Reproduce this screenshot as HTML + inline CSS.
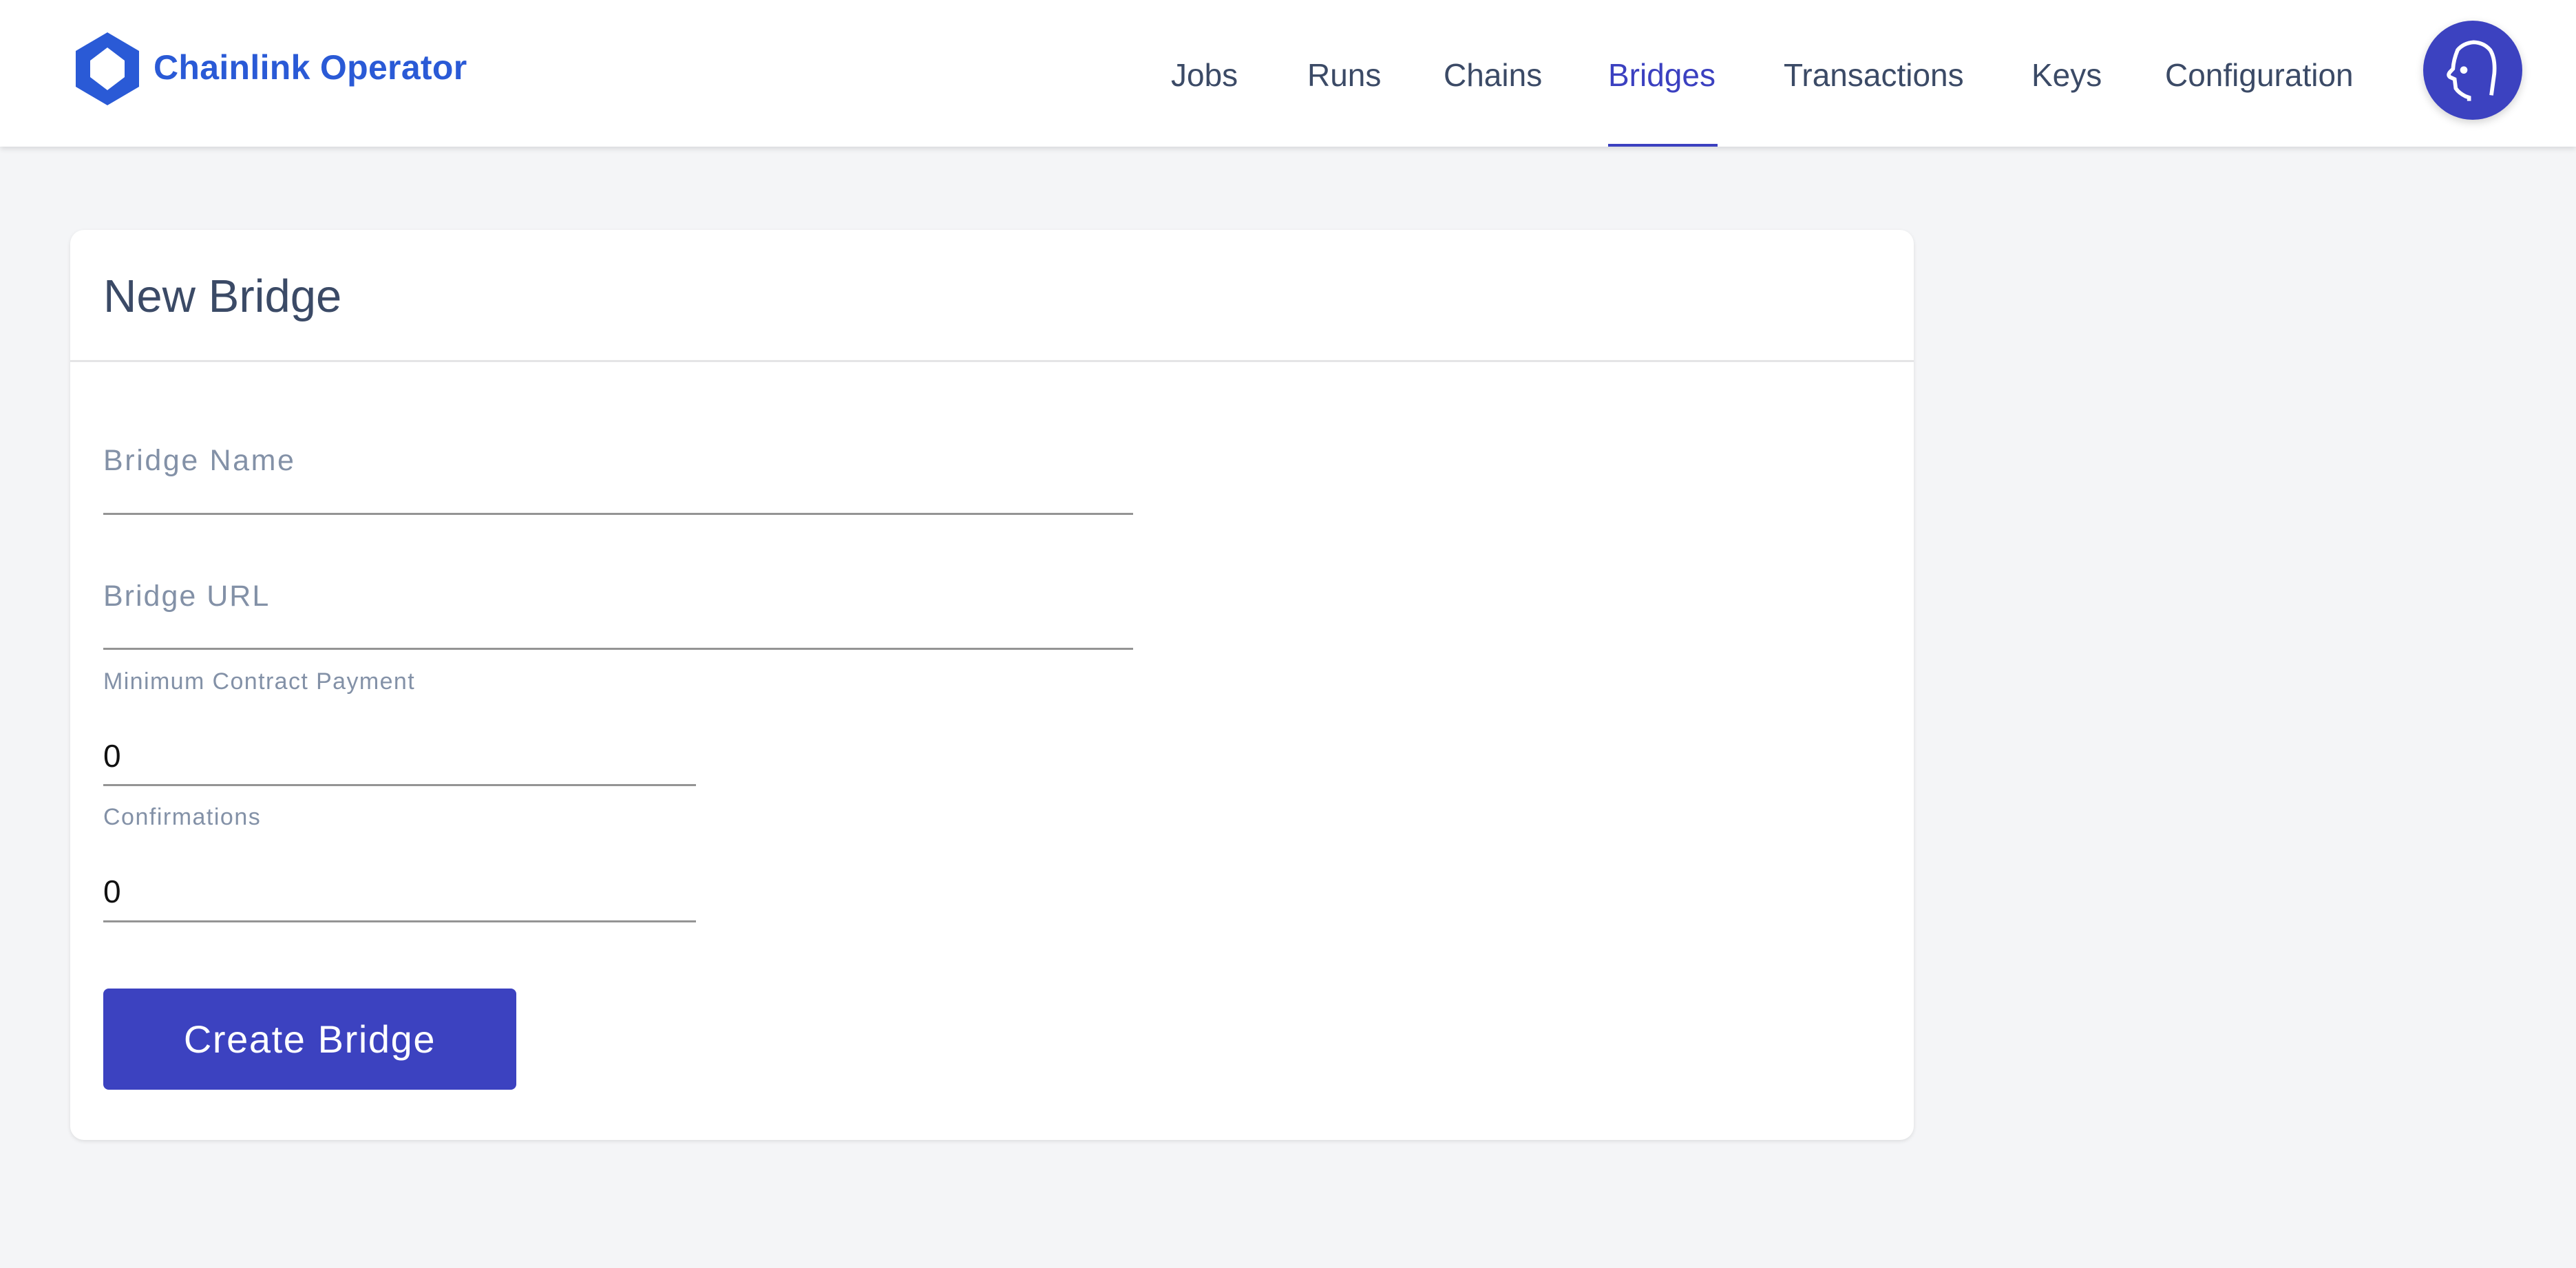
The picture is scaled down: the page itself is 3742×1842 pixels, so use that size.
<!DOCTYPE html>
<html><head><meta charset="utf-8"><style>
*{margin:0;padding:0;box-sizing:border-box}
body{width:3742px;height:1842px;background:#f4f5f7;font-family:"Liberation Sans",sans-serif;position:relative;overflow:hidden}
.hdr{position:absolute;left:0;top:0;width:3742px;height:213px;background:#fff;box-shadow:0 3px 8px rgba(0,0,0,.12)}
.abs{position:absolute;white-space:nowrap;line-height:1}
.nav{font-size:46px;color:#3b4a66;top:86px}
.card{position:absolute;left:102px;top:334px;width:2678px;height:1322px;background:#fff;border-radius:20px;box-shadow:0 2px 6px rgba(0,0,0,.1)}
.lbl{color:#8391a7}
.line{position:absolute;height:3px;background:#949494;left:150px}
</style></head><body>
<div class="hdr">
<svg class="abs" style="left:110px;top:47px" width="92" height="106" viewBox="0 0 92 106"><path d="M46 0 L92 27 V79 L46 106 L0 79 V27 Z M46 22 L21 41 V65 L46 84 L71 65 V41 Z" fill="#2a5ad6" fill-rule="evenodd"/></svg>
<div class="abs" style="left:223px;top:73px;font-size:50px;color:#2a5ad6;font-weight:bold;letter-spacing:0.3px">Chainlink Operator</div>
<div class="abs nav" style="left:1701px">Jobs</div>
<div class="abs nav" style="left:1899px">Runs</div>
<div class="abs nav" style="left:2097px">Chains</div>
<div class="abs nav" style="left:2336px;color:#3b40c0">Bridges</div>
<div class="abs nav" style="left:2591px">Transactions</div>
<div class="abs nav" style="left:2951px">Keys</div>
<div class="abs nav" style="left:3145px">Configuration</div>
<div class="abs" style="left:2336px;top:209px;width:159px;height:4px;background:#3b40c0"></div>
<div class="abs" style="left:3520px;top:30px;width:144px;height:144px;border-radius:50%;background:#3c42c0;box-shadow:0 4px 12px rgba(0,0,0,.18)"></div>
<svg class="abs" style="left:3400px;top:0" width="342" height="230" viewBox="0 0 1026 690"><path d="M560 440 V425 L545 420 Q515 405 502 385 L497 345 L477 336 Q466 328 476 315 L490 300 Q492 262 510 218 Q535 188 580 184 Q625 186 652 218 Q675 255 670 320 L657 415" fill="none" stroke="#fff" stroke-width="17"/><circle cx="537" cy="305" r="16" fill="#fff"/></svg>
</div>
<div class="card">
<div style="position:absolute;left:0;top:189px;width:100%;height:3px;background:#e4e4e6"></div>
</div>
<div class="abs" style="left:150px;top:397px;font-size:67px;color:#3b4a66">New Bridge</div>
<div class="abs lbl" style="left:150px;top:648px;font-size:43px;letter-spacing:2.6px">Bridge Name</div>
<div class="line" style="top:745px;width:1496px"></div>
<div class="abs lbl" style="left:150px;top:845px;font-size:43px;letter-spacing:2px">Bridge URL</div>
<div class="line" style="top:941px;width:1496px"></div>
<div class="abs lbl" style="left:150px;top:973px;font-size:34px;letter-spacing:1.4px">Minimum Contract Payment</div>
<div class="abs" style="left:150px;top:1075px;font-size:46px;color:#111">0</div>
<div class="line" style="top:1139px;width:861px"></div>
<div class="abs lbl" style="left:150px;top:1170px;font-size:34px;letter-spacing:1.5px">Confirmations</div>
<div class="abs" style="left:150px;top:1272px;font-size:46px;color:#111">0</div>
<div class="line" style="top:1337px;width:861px"></div>
<div class="abs" style="left:150px;top:1436px;width:600px;height:147px;background:#3c42c0;border-radius:8px;color:#fff;font-size:56px;letter-spacing:1.6px;display:flex;align-items:center;justify-content:center">Create Bridge</div>
</body></html>
